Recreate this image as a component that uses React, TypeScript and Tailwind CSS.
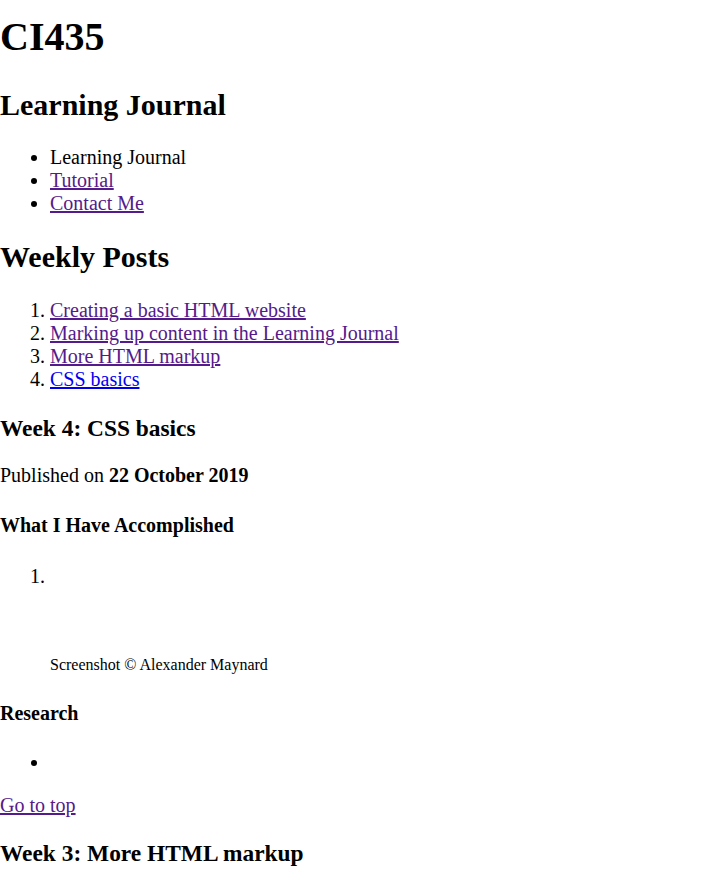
const LINK = "underline text-[#551A8B]";

const posts = [
  { title: "Creating a basic HTML website", visited: true },
  { title: "Marking up content in the Learning Journal", visited: true },
  { title: "More HTML markup", visited: true },
  { title: "CSS basics", visited: false },
];

export default function App() {
  return (
    <div className="min-h-screen bg-white text-black font-['Liberation_Serif','Times_New_Roman',serif] text-[20px] leading-[1.15] flow-root">
      <header>
        <h1 className="text-[40px] font-bold mt-[13.5px] mb-[28px]">CI435</h1>
        <h2 className="text-[30px] font-bold mt-[24.9px] mb-[23.6px]">Learning Journal</h2>
        <nav>
          <ul className="list-disc pl-[50px] my-[20px]">
            <li>Learning Journal</li>
            <li><a href="#" className={LINK}>Tutorial</a></li>
            <li><a href="#" className={LINK}>Contact Me</a></li>
          </ul>
        </nav>
      </header>

      <h2 className="text-[30px] font-bold mt-[25.9px] mb-[24.3px]">Weekly Posts</h2>
      <ol className="list-decimal pl-[50px] my-[20px]">
        {posts.map((p) => (
          <li key={p.title}>
            <a href="#" className={p.visited ? LINK : "underline text-[#0000EE]"}>{p.title}</a>
          </li>
        ))}
      </ol>

      <article>
        <h3 className="text-[23.4px] font-bold mt-[24.2px] mb-[21.9px]">Week 4: CSS basics</h3>
        <p className="my-[20px]">Published on <strong className="font-bold">22 October 2019</strong></p>
        <h4 className="text-[20px] font-bold mt-[26.6px] mb-[28.6px]">What I Have Accomplished</h4>
        <ol className="list-decimal pl-[50px] my-[20px]">
          <li>
            <div>&nbsp;</div>
            <figure className="m-0">
              <div className="h-[67.3px]"></div>
              <figcaption className="text-[16px]">Screenshot © Alexander Maynard</figcaption>
            </figure>
          </li>
        </ol>
        <h4 className="text-[20px] font-bold mt-[27.6px] mb-[26.6px]">Research</h4>
        <ul className="list-disc pl-[50px] my-[20px]">
          <li>&nbsp;</li>
        </ul>
        <p className="my-[20px]"><a href="#" className={LINK}>Go to top</a></p>
      </article>

      <article>
        <h3 className="text-[23.4px] font-bold mt-[22.2px] mb-[23.4px]">Week 3: More HTML markup</h3>
      </article>
    </div>
  );
}
